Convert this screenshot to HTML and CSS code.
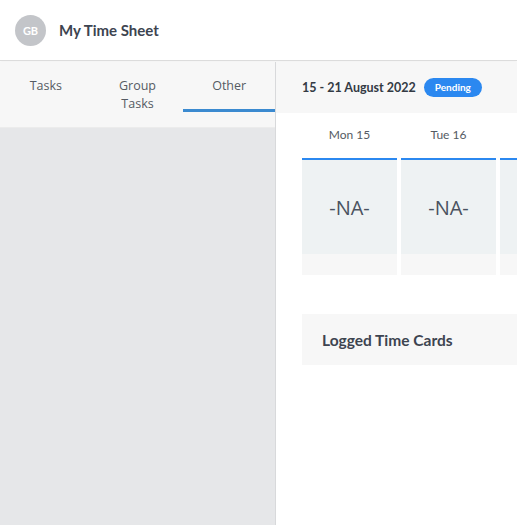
FILE: index.html
```html
<!DOCTYPE html>
<html lang="en">
<head>
  <meta charset="UTF-8">
  <meta name="viewport" content="width=device-width, initial-scale=1.0">
  <title>My Time Sheet</title>
  <link rel="stylesheet" href="styles.css">
</head>
<body>
  <header class="topbar">
    <div class="avatar">GB</div>
    <h1>My Time Sheet</h1>
  </header>
  <div class="layout">
    <aside class="sidebar">
      <nav class="tabs">
        <a class="tab">Tasks</a>
        <a class="tab">Group Tasks</a>
        <a class="tab active">Other</a>
      </nav>
    </aside>
    <main class="content">
      <div class="week-bar">
        <span class="week">15 - 21 August 2022</span>
        <span class="badge">Pending</span>
      </div>
      <div class="days">
        <div class="day">
          <div class="day-name">Mon 15</div>
          <div class="day-cell">-NA-</div>
          <div class="day-foot"></div>
        </div>
        <div class="day">
          <div class="day-name">Tue 16</div>
          <div class="day-cell">-NA-</div>
          <div class="day-foot"></div>
        </div>
        <!-- next day only peeks in at the edge -->
        <div class="day">
          <div class="day-name"></div>
          <div class="day-cell"></div>
          <div class="day-foot"></div>
        </div>
      </div>
      <section class="logged">
        <h2>Logged Time Cards</h2>
      </section>
    </main>
  </div>
</body>
</html>
```

FILE: styles.css
```css
body {
  margin: 0;
  font-family: Lato, "Open Sans", sans-serif;
  color: #3d4450;
  background: #fff;
  height: 525px;
  overflow: hidden;
}
.topbar {
  display: flex;
  align-items: center;
  gap: 13px;
  height: 61px;
  padding-left: 15px;
  border-bottom: 1px solid #dcdcdc;
  box-sizing: border-box;
  box-shadow: 0 1px 2px rgba(0, 0, 0, 0.06);
}
.avatar {
  width: 31px;
  height: 31px;
  border-radius: 50%;
  background: #c3c5c9;
  color: #fff;
  font-size: 11px;
  font-weight: 700;
  display: flex;
  align-items: center;
  justify-content: center;
}
.topbar h1 {
  margin: 0;
  font-size: 15px;
  font-weight: 700;
  color: #3d4450;
}
.layout {
  display: flex;
  height: 464px;
  margin-top: 1px;
}
.sidebar {
  width: 275px;
  flex: none;
  background: #e6e7e9;
  border-right: 1px solid #d8d9db;
}
.tabs {
  display: flex;
  height: 65px;
  background: #f7f7f7;
  border-bottom: 1px solid #ececec;
}
.tab {
  flex: 1;
  height: 50px;
  box-sizing: border-box;
  padding: 15px 20px 0;
  text-align: center;
  font-family: "Open Sans", sans-serif;
  font-size: 12.5px;
  line-height: 18px;
  color: #555b63;
  border-bottom: 3px solid transparent;
}
.tab.active {
  border-bottom-color: #3b8ad0;
}
.content {
  flex: 1;
  overflow: hidden;
}
.week-bar {
  display: flex;
  align-items: center;
  gap: 8px;
  height: 51px;
  padding-left: 26px;
  background: #f7f7f7;
}
.week {
  font-size: 12.5px;
  font-weight: 700;
  color: #333a44;
}
.badge {
  background: #2b88f0;
  color: #fff;
  font-size: 10px;
  font-weight: 700;
  line-height: 19px;
  padding: 0 11px;
  border-radius: 10px;
}
.days {
  display: flex;
  gap: 4px;
  padding-left: 26px;
}
.day {
  width: 95px;
  flex: none;
}
.day-name {
  height: 45px;
  line-height: 44px;
  text-align: center;
  font-size: 12px;
  color: #555b63;
}
.day-cell {
  height: 94px;
  border-top: 2px solid #2b88f0;
  background: #eef2f3;
  display: flex;
  align-items: center;
  justify-content: center;
  font-family: "Open Sans", sans-serif;
  font-size: 20px;
  color: #4a5260;
}
.day-foot {
  height: 21px;
  background: #f7f7f7;
}
.logged {
  margin: 39px 0 0 26px;
  height: 51px;
  padding-left: 20px;
  background: #f7f7f7;
  display: flex;
  align-items: center;
}
.logged h2 {
  margin: 0;
  font-size: 15.5px;
  font-weight: 700;
  color: #3d4450;
}
```
